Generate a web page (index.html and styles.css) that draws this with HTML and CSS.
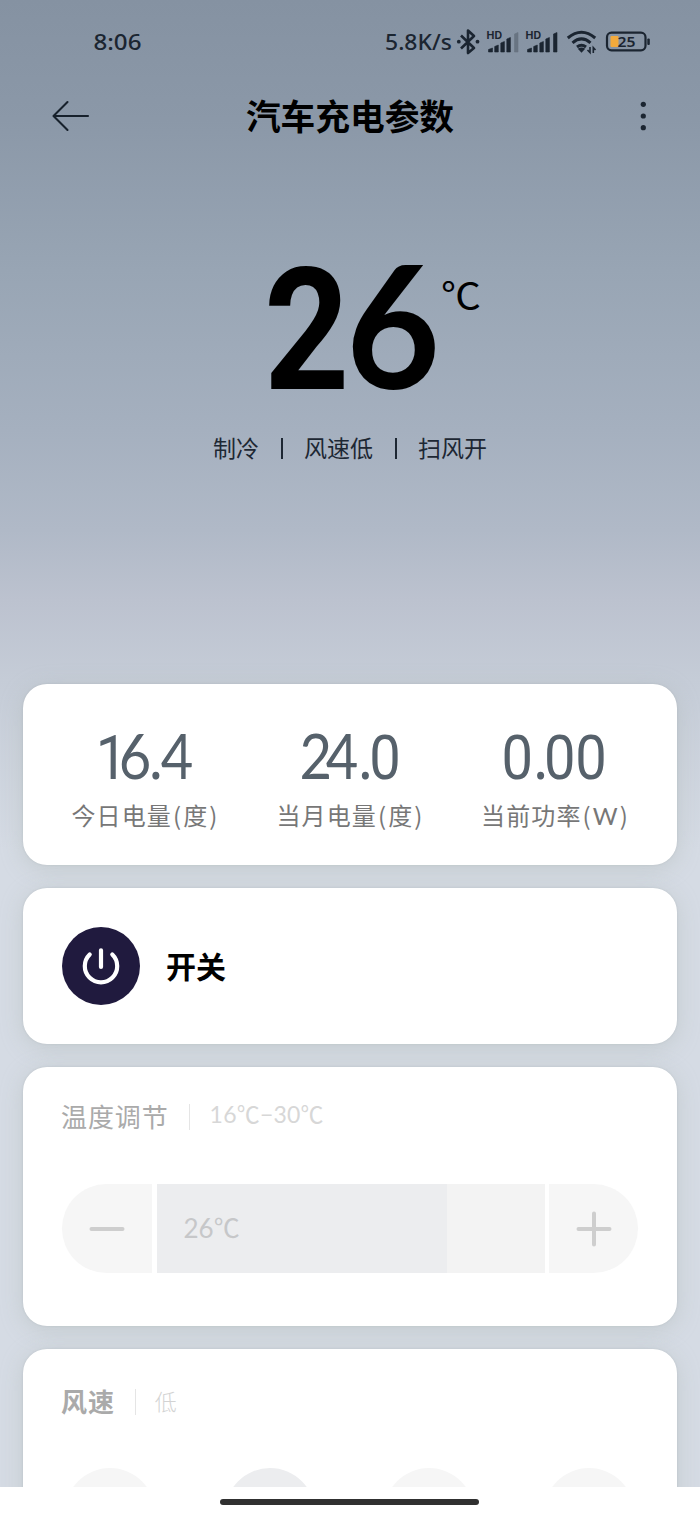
FILE: index.html
```html
<!DOCTYPE html>
<html lang="zh-CN">
<head>
<meta charset="utf-8">
<title>汽车充电参数</title>
<link rel="stylesheet" href="styles.css">
</head>
<body>
<div class="screen">
  <main class="page">
    <div class="status">
      <svg width="700" height="84" viewBox="0 0 700 84">
        <g class="status-text">
          <text x="93.500" y="50" textLength="48" lengthAdjust="spacingAndGlyphs">8:06</text>
          <text x="385" y="50" textLength="67" lengthAdjust="spacingAndGlyphs">5.8K/s</text>
        </g>
        <path class="line bt" d="M461 35.500L474 48L468 53V30.500L474 36L461 48.500"/>
        <circle cx="458.800" cy="41.700" r="1.900"/><circle cx="477.500" cy="41.700" r="1.900"/>
        <g class="hd"><text x="486.500" y="38.800" textLength="15.500" lengthAdjust="spacingAndGlyphs">HD</text><text x="525.500" y="38.800" textLength="15.500" lengthAdjust="spacingAndGlyphs">HD</text></g>
        <path class="bar" d="M488.500 52V49.500L492.500 48V52ZM494.700 52V46.500L498.300 45V52ZM500.800 52V43L504.400 41.500V52ZM506.800 52V39L510.400 37.500V52Z"/>
        <path class="bar faded" d="M514.500 52V34L518 32.500V52Z"/>
        <path class="bar" d="M527.500 52V49.500L531.500 48V52ZM533.700 52V46.500L537.300 45V52ZM539.800 52V43L543.400 41.500V52ZM545.800 52V39L549.400 37.500V52ZM553.500 52V34L557 32.500V52Z"/>
        <path class="line wifi" d="M567.800 38Q581.500 26.500 595.200 38M572.500 42.800Q581.500 35 590.500 42.800M577 47Q581.500 43.500 586 47"/>
        <path d="M577.800 48.800Q581.500 46 585.200 48.800L581.500 52.800Z"/>
        <path class="arrows" d="M590 47V52.500L587.500 50M593.300 53V47.500L595.500 50"/>
        <rect class="line battery" x="607" y="32.700" width="38.500" height="17.600" rx="4.500"/>
        <rect class="charge" x="610.500" y="36" width="8" height="11" rx="1"/>
        <rect x="647.300" y="38.500" width="2.500" height="6.500" rx="1"/>
        <text class="percent" x="617.500" y="47.300" textLength="18" lengthAdjust="spacingAndGlyphs">25</text>
      </svg>
    </div>
    <header class="header">
      <svg class="back" width="40" height="36" viewBox="0 0 40 36"><path d="M17.500 4L3.500 18L17.500 32M4 18H38"/></svg>
      <h1 class="title">汽车充电参数</h1>
      <svg class="more" width="40" height="36" viewBox="0 0 40 36"><circle cx="33.300" cy="6.300" r="2.600"/><circle cx="33.300" cy="18" r="2.600"/><circle cx="33.300" cy="29.700" r="2.600"/></svg>
    </header>
    <section class="hero">
      <svg class="temperature" width="240" height="150" viewBox="0 0 240 150">
        <text class="degree two" transform="translate(23 139) scale(.87 1)">2</text>
        <text class="degree" transform="translate(105 139) scale(.95 1)">6</text>
        <text class="unit" x="200" y="60" textLength="40" lengthAdjust="spacingAndGlyphs">℃</text>
      </svg>
      <div class="modes"><span>制冷</span><i></i><span>风速低</span><i></i><span>扫风开</span></div>
    </section>
    <section class="card stats">
      <div class="stat">
        <svg width="150" height="80" viewBox="0 0 150 80"><text transform="scale(.92 1)" x="27 52 85 97.500" y="65"><tspan class="narrow">1</tspan>6.4</text></svg>
        <span>今日电量<em>(</em>度<em>)</em></span>
      </div>
      <div class="stat">
        <svg width="150" height="80" viewBox="0 0 150 80"><text transform="scale(.92 1)" x="25.500 54 90 101.500" y="65">24.<tspan class="narrow">0</tspan></text></svg>
        <span>当月电量<em>(</em>度<em>)</em></span>
      </div>
      <div class="stat">
        <svg width="150" height="80" viewBox="0 0 150 80"><text transform="scale(.92 1)" x="22.300 57.500 68.500 102.500" y="65"><tspan class="narrow">0</tspan>.<tspan class="narrow">00</tspan></text></svg>
        <span>当前功率<em>(</em>W<em>)</em></span>
      </div>
    </section>
    <section class="card power">
      <div class="power-button"><svg width="78" height="78" viewBox="0 0 78 78"><path d="M27.700 27.500A16.200 16.200 0 1 0 50.300 27.500M39 23.300V40"/></svg></div>
      <span class="power-label">开关</span>
    </section>
    <section class="card adjust">
      <div class="heading"><span class="name">温度调节</span><i></i><span class="range">16℃−30℃</span></div>
      <div class="slider">
        <div class="step minus"><svg width="36" height="36" viewBox="0 0 36 36"><path d="M2.500 18H33.500"/></svg></div>
        <div class="track"><div class="fill">26℃</div></div>
        <div class="step plus"><svg width="36" height="36" viewBox="0 0 36 36"><path d="M2.500 18H33.500M18 2.500V33.500"/></svg></div>
      </div>
    </section>
    <section class="card wind">
      <div class="heading"><span class="name strong">风速</span><i></i><span class="level">低</span></div>
      <div class="choices"><span></span><span class="chosen"></span><span></span><span></span></div>
    </section>
  </main>
  <footer class="nav"><div class="handle"></div></footer>
</div>
</body>
</html>
```
FILE: styles.css
```css
* { box-sizing: border-box; }
body { margin: 0; font-family: Lato, "Noto Sans CJK SC", sans-serif; }
svg { display: block; flex: none; overflow: visible; }
.screen { width: 700px; height: 1516px; overflow: hidden; background: #fff; }
.page {
  height: 1487px; overflow: hidden;
  background: linear-gradient(#8592a2 0, #8b98a8 120px, #98a5b4 270px, #a5b0bf 430px, #b0b9c7 530px, #bcc2cf 600px, #c5ccd7 680px, #d5dbe4 850px, #d5dbe4 100%);
}
.status { height: 84px; }
.status svg { fill: #1b2531; }
.status-text { font-family: "Noto Sans", sans-serif; font-size: 22px; font-weight: 500; }
.hd { font: 700 10.5px Inter, sans-serif; }
.line { fill: none; stroke: #1b2531; }
.bt { stroke-width: 2.6; stroke-linejoin: round; }
.bar { stroke: #1b2531; stroke-width: .6; stroke-linejoin: round; }
.status .faded { fill: #687482; stroke: #687482; }
.status .line { fill: none; }
.wifi { stroke-width: 3; }
.status .arrows { fill: none; stroke: #1b2531; stroke-width: 1.6; }
.battery { stroke-width: 2.2; }
.status .charge { fill: #f2aa3c; }
.percent { font: 600 14px "Noto Sans", sans-serif; }

.header { height: 64px; display: flex; justify-content: space-between; align-items: center; padding: 0 50px; }
.back { fill: none; stroke: #17212c; stroke-width: 2.1; stroke-linecap: round; stroke-linejoin: round; }
.title { margin: 0 0 2px; font-size: 34.700px; line-height: 50px; font-weight: 700; font-family: "Noto Sans CJK SC", sans-serif; }
.more { fill: #1b2531; }
.hero { height: 536px; padding-top: 102px; display: flex; flex-direction: column; align-items: center; }
.temperature { margin-left: 21px; }
.degree { font: 700 171px Lato, sans-serif; }
.two { font-family: Roboto, sans-serif; }
.unit { font: 400 37px "Noto Sans CJK SC", sans-serif; }
.modes { display: flex; align-items: center; margin-top: 31px; font-size: 23px; line-height: 34px; color: #1d2733; }
.modes i { width: 2px; height: 21px; margin: 0 21px 0 22px; background: #1d2733; }

.card { margin: 0 23px 23px; border-radius: 24px; background: #fff; box-shadow: 0 0 2px rgba(130, 140, 145, .25), 0 4px 22px rgba(170, 180, 175, .4); }
.stats { height: 181px; padding: 30px 19px 0 20px; display: grid; grid-template-columns: repeat(3, 205px); }
.stat { display: flex; flex-direction: column; align-items: center; white-space: nowrap; }
.stat text { font: 400 61px Lato, sans-serif; fill: #56616b; }
.stat .narrow { font-family: Roboto, sans-serif; }
.stat span { line-height: 36px; margin-top: 3px; font-size: 24px; letter-spacing: 1.1px; color: #777; }
.stat em { font-style: normal; font-family: "Noto Sans CJK SC", sans-serif; margin: 0 1px; }
.power { height: 156px; padding-left: 39px; display: flex; align-items: center; gap: 26px; }
.power-button { width: 78px; height: 78px; border-radius: 50%; background: #201a3e; }
.power-button path { fill: none; stroke: #fff; stroke-width: 4.200; stroke-linecap: round; }
.power-label { font-size: 30px; line-height: 44px; font-weight: 700; margin-top: -1px; }
.adjust { height: 259px; padding: 31px 38px; }
.heading { height: 38px; display: flex; align-items: center; }
.heading .name { font-size: 26px; line-height: 38px; letter-spacing: .900px; color: #aaa; }
.heading .strong { font-weight: 700; }
.heading i { width: 1px; height: 26px; margin: 0 20px; background: #e5e5e5; }
.heading .range { font-size: 23px; line-height: 34px; color: #d7d7d7; margin-top: -6px; letter-spacing: .2px; }
.heading .level { font-size: 22px; line-height: 34px; color: #d3d3d3; font-weight: 300; margin-left: -1px; }
.slider { height: 89px; margin: 48px 0 0 1px; display: grid; grid-template-columns: 90px 388px 89px; gap: 4.500px; }
.step { display: grid; place-items: center; background: #f6f6f6; }
.minus { border-radius: 45px 0 0 45px; }
.plus { border-radius: 0 45px 45px 0; }
.step path { fill: none; stroke: #cecece; stroke-width: 4; stroke-linecap: round; }
.track { background: #f3f3f3; }
.fill { width: 290px; height: 89px; padding-left: 27px; background: #ecedef; font-size: 26px; line-height: 89px; color: #c6c7c9; }
.wind { height: 259px; padding: 34px 38px 0; }
.choices { display: flex; justify-content: space-between; margin: 47px 0 0; padding: 0 5px 0 4px; }
.choices span { width: 90px; height: 90px; border-radius: 50%; background: #f6f6f6; }
.choices .chosen { background: #ecedef; }
.nav { height: 29px; display: flex; justify-content: center; padding: 12px 1px 0 0; background: #fff; }
.handle { width: 259px; height: 6px; border-radius: 3px; background: #303030; }
```
